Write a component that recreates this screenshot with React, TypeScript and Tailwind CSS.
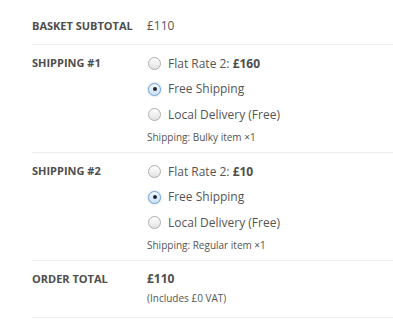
import React from 'react';

interface Option {
  label: string;
  price?: string;
  checked?: boolean;
}

const Radio: React.FC<{ checked?: boolean }> = ({ checked }) => (
  <span
    className={
      checked
        ? 'flex h-[13px] w-[13px] shrink-0 items-center justify-center rounded-full border border-[#6f9fd6] bg-gradient-to-b from-[#f4f8fd] to-[#cfe0f5] shadow-[0_0_2px_#8fb8e8]'
        : 'flex h-[13px] w-[13px] shrink-0 items-center justify-center rounded-full border border-[#adadad] bg-gradient-to-b from-[#ffffff] to-[#e2e2e2]'
    }
  >
    {checked && <span className="h-[4px] w-[4px] rounded-full bg-[#1d2a3a]" />}
  </span>
);

const ShippingRow: React.FC<{ title: string; options: Option[]; note: string }> = ({ title, options, note }) => (
  <div className="flex border-b border-[#ededed] pt-[6px] pb-[7px]">
    <div className="mt-[3px] w-[115px] shrink-0 text-[11px] font-bold leading-[18px] text-[#4e4e4e]">{title}</div>
    <div className="flex flex-col">
      {options.map((o, i) => (
        <label key={i} className="flex h-[25.5px] items-center gap-[7px] pl-[1px] text-[12px] text-[#555]">
          <Radio checked={o.checked} />
          <span>
            {o.label}
            {o.price && <b className="font-bold text-[#4e4e4e]">{o.price}</b>}
          </span>
        </label>
      ))}
      <div className="mt-[1.5px] text-[10px] leading-[16px] text-[#555]">{note}</div>
    </div>
  </div>
);

export default function App() {
  return (
    <div className="h-[330px] w-[393px] bg-white pl-[32px] font-['Open_Sans',sans-serif]">
      <div className="flex border-b border-[#ededed] pt-[17px] pb-[9px]">
        <div className="w-[115px] shrink-0 text-[11px] font-bold leading-[18px] text-[#4e4e4e]">BASKET SUBTOTAL</div>
        <div className="text-[12px] leading-[18px] text-[#555]">£110</div>
      </div>

      <ShippingRow
        title="SHIPPING #1"
        options={[
          { label: 'Flat Rate 2: ', price: '£160' },
          { label: 'Free Shipping', checked: true },
          { label: 'Local Delivery (Free)' },
        ]}
        note="Shipping: Bulky item ×1"
      />

      <ShippingRow
        title="SHIPPING #2"
        options={[
          { label: 'Flat Rate 2: ', price: '£10' },
          { label: 'Free Shipping', checked: true },
          { label: 'Local Delivery (Free)' },
        ]}
        note="Shipping: Regular item ×1"
      />

      <div className="flex border-b border-[#ededed] pt-[9px] pb-[11px]">
        <div className="w-[115px] shrink-0 text-[11px] font-bold leading-[18px] text-[#4e4e4e]">ORDER TOTAL</div>
        <div className="flex flex-col">
          <div className="text-[12px] font-bold leading-[18px] text-[#4e4e4e]">£110</div>
          <div className="mt-[2px] text-[10px] leading-[16px] text-[#555]">(Includes £0 VAT)</div>
        </div>
      </div>
    </div>
  );
}
